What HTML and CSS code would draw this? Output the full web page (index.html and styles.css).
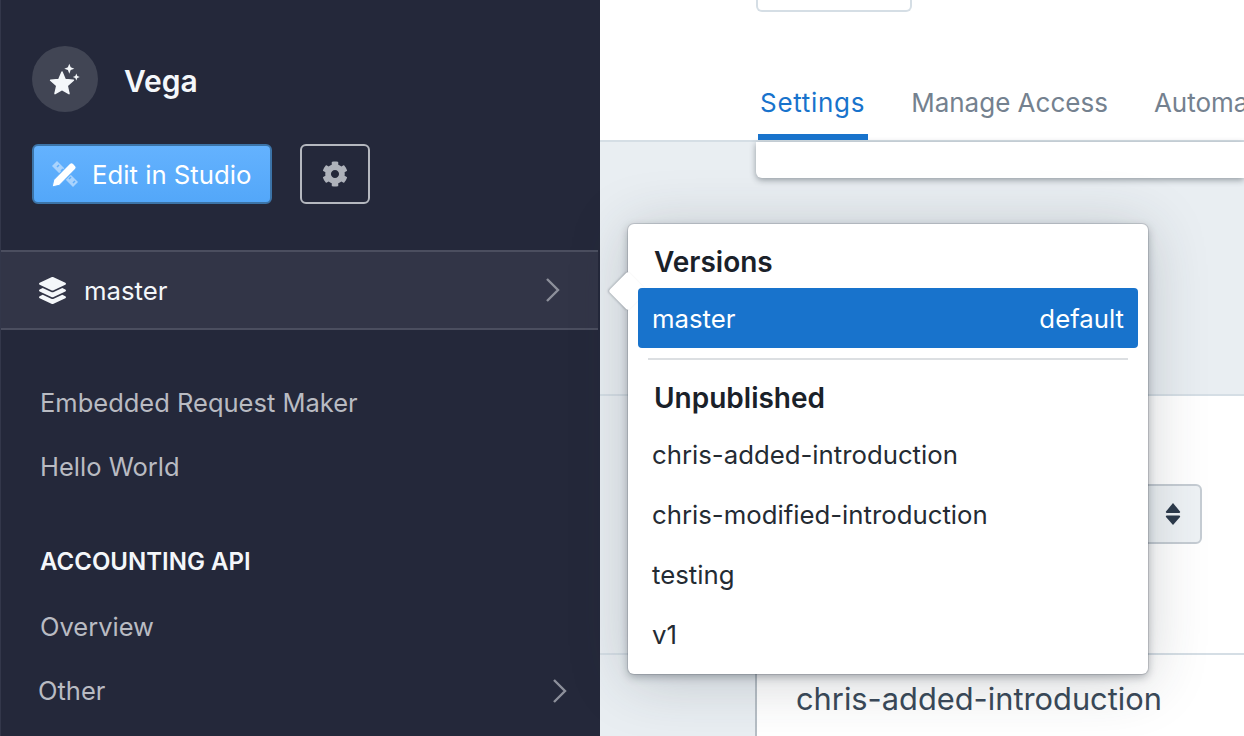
FILE: index.html
```html
<!DOCTYPE html>
<html lang="en">
<head>
    <meta charset="UTF-8">
    <meta name="viewport" content="width=device-width, initial-scale=1.0">
    <title>Vega</title>
    <link rel="stylesheet" href="styles.css">
</head>
<body>
    <div class="app">
        <aside class="sidebar">
            <div class="brand">
                <div class="brandLogo">
                    <svg width="36" height="36" viewBox="0 0 36 36" fill="#f4f7fa">
                        <path d="M15 11l3.200 7.500 8.200.8-6.200 5.400 1.800 8-7-4.200-7 4.200 1.800-8-6.200-5.400 8.200-.8z" stroke="#f4f7fa" stroke-width="1.500" stroke-linejoin="round"/>
                        <path d="M22.300 2.700l1.400 3.600 3.600 1.400-3.600 1.400-1.400 3.600-1.400-3.600-3.600-1.400 3.600-1.400z"/>
                        <path d="M29.300 12.500l1 2.500 2.500 1-2.500 1-1 2.500-1-2.500-2.500-1 2.500-1z"/>
                    </svg>
                </div>
                <span class="brandName">Vega</span>
            </div>
            <div class="actions">
                <button class="btnEdit">
                    <svg width="28" height="28" viewBox="0 0 28 28">
                        <path d="M1 6l5-5 21 21-5 5z" fill="#a9d3fd"/>
                        <path d="M6 7l2-2M10 11l2-2M18 19l2-2M22 23l2-2" stroke="#5eaefc" stroke-width="1.500"/>
                        <path d="M1 27l1.700-7.500L18.500 3.700c1.200-1.200 2.800-1.200 4 0l1.800 1.800c1.200 1.200 1.200 2.800 0 4L8.500 25.300z" fill="#fff" stroke="#5eaefc" stroke-width="1.200"/>
                    </svg>
                    Edit in Studio
                </button>
                <button class="btnGear">
                    <svg width="26" height="26" viewBox="0 0 512 512" fill="#aeb2ba">
                        <path d="M487.4 315.700l-42.600-24.600c4.300-23.200 4.300-47 0-70.200l42.600-24.600c4.900-2.800 7.100-8.600 5.500-14-11.100-35.600-30-67.800-54.700-94.600-3.800-4.100-10-5.100-14.800-2.300L380.800 110c-17.900-15.400-38.500-27.300-60.800-35.100V25.800c0-5.600-3.900-10.500-9.400-11.700-36.700-8.200-74.300-7.800-109.200 0-5.500 1.200-9.400 6.100-9.400 11.700V75c-22.200 7.900-42.800 19.800-60.800 35.100L88.700 85.500c-4.900-2.800-11-1.900-14.800 2.300-24.700 26.700-43.600 58.900-54.700 94.600-1.700 5.400.6 11.200 5.500 14L67.300 221c-4.300 23.200-4.300 47 0 70.200l-42.600 24.600c-4.900 2.800-7.100 8.600-5.500 14 11.100 35.600 30 67.800 54.700 94.600 3.800 4.100 10 5.100 14.800 2.300l42.600-24.600c17.900 15.400 38.500 27.300 60.800 35.100v49.200c0 5.600 3.900 10.500 9.400 11.700 36.700 8.200 74.300 7.800 109.200 0 5.500-1.200 9.400-6.100 9.400-11.700v-49.200c22.200-7.900 42.800-19.800 60.800-35.100l42.600 24.600c4.900 2.800 11 1.900 14.800-2.300 24.700-26.700 43.600-58.900 54.700-94.600 1.500-5.500-.7-11.300-5.600-14.100zM256 336c-44.100 0-80-35.900-80-80s35.900-80 80-80 80 35.900 80 80-35.900 80-80 80z"/>
                    </svg>
                </button>
            </div>
            <div class="versionRow">
                <svg width="27" height="27" viewBox="0 0 512 512" fill="#f4f7fa">
                    <path d="M12.410 148.020l232.940 105.670c6.800 3.090 14.490 3.090 21.290 0l232.940-105.670c16.550-7.510 16.550-32.520 0-40.030L266.650 2.310a25.607 25.607 0 0 0-21.290 0L12.410 107.980c-16.550 7.510-16.550 32.530 0 40.040zm487.180 88.280l-58.090-26.330-161.640 73.270c-7.560 3.430-15.590 5.170-23.860 5.170s-16.290-1.740-23.860-5.170L70.510 209.970l-58.100 26.330c-16.550 7.500-16.550 32.500 0 40l232.940 105.590c6.800 3.080 14.490 3.080 21.290 0L499.590 276.300c16.550-7.500 16.550-32.500 0-40zm0 127.800l-57.870-26.230-161.860 73.370c-7.560 3.430-15.590 5.170-23.860 5.170s-16.290-1.740-23.860-5.170L70.290 337.870 12.410 364.100c-16.550 7.500-16.550 32.500 0 40l232.940 105.590c6.800 3.080 14.490 3.080 21.290 0L499.590 404.100c16.550-7.500 16.550-32.500 0-40z"/>
                </svg>
                <span class="versionName">master</span>
                <svg class="chevron" width="16" height="26" viewBox="0 0 16 26">
                    <path d="M2 2l11 11L2 24" fill="none" stroke="#8d909b" stroke-width="2.400"/>
                </svg>
            </div>
            <nav class="nav">
                <a class="navLink">Embedded Request Maker</a>
                <a class="navLink">Hello World</a>
                <h4 class="navTitle">ACCOUNTING API</h4>
                <a class="navLink">Overview</a>
                <a class="navLink navOther">Other
                    <svg width="16" height="26" viewBox="0 0 16 26">
                        <path d="M2 2l11 11L2 24" fill="none" stroke="#8d909b" stroke-width="2.400"/>
                    </svg>
                </a>
            </nav>
        </aside>

        <main class="main">
            <header class="topbar">
                <div class="topBox"></div>
                <div class="tabs">
                    <a class="tab tabActive">Settings</a>
                    <a class="tab">Manage Access</a>
                    <a class="tab">Automation</a>
                </div>
            </header>
            <div class="content">
                <div class="card cardTop"></div>
                <div class="card cardForm">
                    <div class="selectBox">
                        <svg width="16" height="24" viewBox="0 0 16 24" fill="#2c3a4b">
                            <path d="M8 1l7 8.500c.4.700 0 1.500-.8 1.500H1.800C1 11 .6 10.200 1 9.500z"/>
                            <path d="M8 23L1 15c-.4-.700 0-1.500.8-1.500h12.400c.8 0 1.200.8.8 1.500z"/>
                        </svg>
                    </div>
                </div>
                <div class="card cardBottom">
                    <h2 class="cardHeading">chris-added-introduction</h2>
                </div>
            </div>
        </main>

        <div class="popover">
            <h5 class="popTitle">Versions</h5>
            <div class="popItem popItemActive"><span>master</span><span>default</span></div>
            <hr class="popLine">
            <h5 class="popTitle popTitleNext">Unpublished</h5>
            <div class="popItem">chris-added-introduction</div>
            <div class="popItem">chris-modified-introduction</div>
            <div class="popItem">testing</div>
            <div class="popItem">v1</div>
        </div>
    </div>
</body>
</html>
```

FILE: styles.css
```css
* {
    box-sizing: border-box;
}
html, body {
    margin: 0;
    height: 100%;
    overflow: hidden;
}
body {
    font-family: Inter, "Noto Sans", sans-serif;
    font-size: 25.75px;
}
.app {
    position: relative;
    display: flex;
    height: 736px;
    width: 1244px;
    overflow: hidden;
}

/* sidebar */
.sidebar {
    width: 600px;
    flex-shrink: 0;
    background-color: #24283a;
    padding-top: 46px;
    border-left: 1px solid #33374a;
    display: flex;
    flex-direction: column;
}
.brand {
    display: flex;
    align-items: center;
    padding-left: 31px;
    gap: 26px;
}
.brandLogo {
    width: 66px;
    height: 66px;
    border-radius: 50%;
    background-color: #414554;
    display: flex;
    align-items: center;
    justify-content: center;
}
.brandName {
    font-size: 30px;
    font-weight: 600;
    color: #f4f7fa;
    padding-top: 3px;
}
.actions {
    display: flex;
    gap: 28px;
    padding-left: 31px;
    margin-top: 32px;
}
.btnEdit {
    width: 240px;
    height: 60px;
    border: 2px solid #3c74a8;
    border-radius: 6px;
    background: linear-gradient(#64b2fe, #53a7f9);
    color: #fff;
    font-family: inherit;
    font-size: 25.75px;
    display: flex;
    align-items: center;
    gap: 13px;
    padding: 0 0 0 17px;
}
.btnGear {
    width: 70px;
    height: 60px;
    border: 2px solid #b5b8bf;
    border-radius: 6px;
    background: transparent;
    display: flex;
    align-items: center;
    justify-content: center;
    padding: 0;
}
.versionRow {
    margin-top: 46px;
    width: 597px;
    height: 80px;
    background-color: #323547;
    border-top: 2px solid #4b4e5f;
    border-bottom: 2px solid #4b4e5f;
    display: flex;
    align-items: center;
    padding-left: 38px;
    color: #f4f7fa;
}
.versionName {
    margin-left: 18px;
}
.chevron {
    margin-left: auto;
    margin-right: 37px;
}
.nav {
    display: flex;
    flex-direction: column;
    padding-left: 39px;
    padding-top: 41px;
}
.navLink {
    color: #b9bbc2;
    font-size: 25.5px;
    line-height: 64px;
    height: 64px;
    display: block;
}
.navTitle {
    margin: 45px 0 0;
    color: #f4f7fa;
    font-size: 24px;
    font-weight: 600;
    line-height: 36px;
    height: 51px;
}
.navOther {
    margin-left: -2px;
    display: flex;
    align-items: center;
    justify-content: space-between;
    padding-right: 32px;
}

/* main area */
.main {
    flex: 1;
    background-color: #e9eef2;
    min-width: 0;
}
.topbar {
    height: 142px;
    background-color: #fff;
    border-bottom: 2px solid #d5dee5;
    padding-left: 156px;
    display: flex;
    flex-direction: column;
}
.topBox {
    width: 156px;
    height: 12px;
    border: 2px solid #d5dee5;
    border-top: 0;
    border-radius: 0 0 6px 6px;
}
.tabs {
    display: flex;
    gap: 40px;
    margin-top: auto;
    margin-left: 2px;
    overflow: hidden;
}
.tab {
    color: #74818f;
    font-size: 26px;
    height: 64px;
    padding: 0 3px;
    line-height: 54px;
    white-space: nowrap;
}
.tabActive {
    color: #1873cc;
    letter-spacing: .7px;
    padding: 0 3px 0 2px;
    border-bottom: 6px solid #1873cc;
}
.content {
    padding-left: 156px;
}
.card {
    background-color: #fff;
}
.cardTop {
    height: 36px;
    border-radius: 0 0 0 6px;
    box-shadow: 0 2px 6px rgba(40, 50, 60, .45);
}
.cardForm {
    margin-top: 216px;
    height: 261px;
    margin-left: -156px;
    padding-left: 156px;
    background: linear-gradient(to right, #e9eef2 156px, #fff 156px);
    border-top: 2px solid #d5dee5;
    border-bottom: 2px solid #d5dee5;
    position: relative;
}
.selectBox {
    position: absolute;
    left: 441px;
    top: 88px;
    width: 161px;
    height: 60px;
    border: 2px solid #c5ccd3;
    border-radius: 6px;
    background-color: #eef2f5;
    display: flex;
    align-items: center;
    justify-content: flex-end;
    padding-right: 19px;
}
.cardBottom {
    height: 90px;
    padding: 24px 0 0 39px;
    border-left: 2px solid #b6bec5;
    margin-left: -1px;
}
.cardHeading {
    margin: 0;
    font-size: 30.8px;
    font-weight: 400;
    line-height: 40px;
    color: #3a4959;
    white-space: nowrap;
}

/* versions popover */
.popover {
    position: absolute;
    left: 628px;
    top: 224px;
    width: 520px;
    height: 450px;
    background-color: #fff;
    border-radius: 6px;
    padding: 16px 10px 0;
    box-shadow: 0 0 0 1px rgba(40, 50, 60, .15), 0 3px 8px rgba(40, 50, 60, .35), 0 6px 60px rgba(40, 50, 60, .22);
}
.popover::before {
    content: "";
    position: absolute;
    left: -14px;
    top: 53px;
    width: 28px;
    height: 28px;
    background-color: #fff;
    transform: rotate(45deg);
    border-radius: 3px;
    box-shadow: -1px 1px 2px rgba(40, 50, 60, .25);
}
.popover > * {
    position: relative;
}
.popTitle {
    margin: 0;
    padding-left: 16px;
    font-size: 28px;
    font-weight: 600;
    line-height: 44px;
    height: 48px;
    color: #1a2129;
}
.popTitleNext {
    margin-top: 16px;
    height: 49px;
}
.popItem {
    height: 60px;
    line-height: 60px;
    padding: 0 14px;
    color: #242b33;
    border-radius: 4px;
    white-space: nowrap;
}
.popItemActive {
    background-color: #1873cc;
    color: #fff;
    display: flex;
    justify-content: space-between;
    line-height: 62px;
}
.popLine {
    margin: 10px 10px 0;
    border: 0;
    height: 2px;
    background-color: #dcdfe2;
}
```
